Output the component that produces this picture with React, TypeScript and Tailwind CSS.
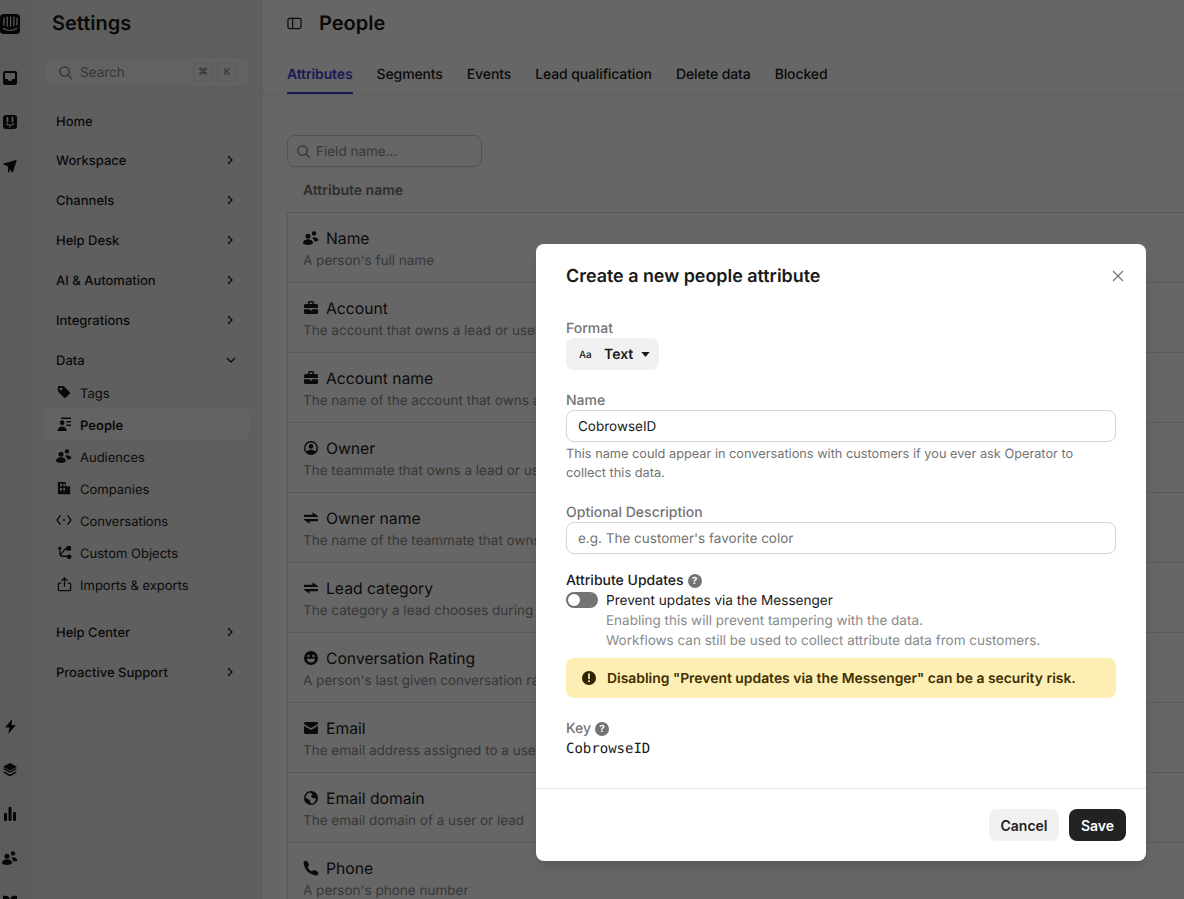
import React from "react";

type IconProps = { className?: string };

const Svg = ({ className, children }: IconProps & { children: React.ReactNode }) => (
  <svg viewBox="0 0 16 16" fill="currentColor" className={className}>
    {children}
  </svg>
);

const PeopleIcon = ({ className }: IconProps) => (
  <Svg className={className}>
    <circle cx="11" cy="3.400" r="2.200" />
    <circle cx="5" cy="6.200" r="2.500" />
    <path d="M9 7.800c1-.8 3-.8 4.200 0 1 .6 2.300 1.500 2.300 2.300 0 .8-1.700 1.300-4.200 1.300-.3-1.400-1.100-2.700-2.300-3.600z" />
    <path d="M0 13c0-2.200 2.300-3.700 5-3.700s5 1.500 5 3.700c0 1.100-2.300 1.900-5 1.900S0 14.100 0 13z" />
  </Svg>
);

const BriefcaseIcon = ({ className }: IconProps) => (
  <Svg className={className}>
    <path d="M5 2.500A1.500 1.500 0 0 1 6.500 1h3A1.500 1.500 0 0 1 11 2.500V4h2.500A1.500 1.500 0 0 1 15 5.500V8H1V5.500A1.500 1.500 0 0 1 2.500 4H5V2.500zM6.500 2.500V4h3V2.500h-3z" fillRule="evenodd" />
    <path d="M1 9.200h6V10.500h2V9.200h6v3.300a1.500 1.500 0 0 1-1.500 1.500h-11A1.500 1.500 0 0 1 1 12.500V9.200z" />
  </Svg>
);

const OwnerIcon = ({ className }: IconProps) => (
  <Svg className={className}>
    <path
      fillRule="evenodd"
      d="M8 1a7 7 0 1 0 0 14A7 7 0 0 0 8 1zm0 1.500a5.500 5.500 0 0 1 4.300 8.900C11.400 10.300 9.800 9.800 8 9.800s-3.400.5-4.300 1.600A5.500 5.500 0 0 1 8 2.500z"
    />
    <circle cx="8" cy="6.400" r="2.300" />
  </Svg>
);

const SwapIcon = ({ className }: IconProps) => (
  <Svg className={className}>
    <path d="M1 4.800h8.500V2.300L15 6.300V7H1zM15 9H1v.7l5.500 4v-2.500H15z" />
  </Svg>
);

const SmileIcon = ({ className }: IconProps) => (
  <Svg className={className}>
    <path
      fillRule="evenodd"
      d="M8 1a7 7 0 1 0 0 14A7 7 0 0 0 8 1zM5.500 4.800a1.200 1.200 0 1 1 0 2.400 1.200 1.200 0 0 1 0-2.400zm5 0a1.200 1.200 0 1 1 0 2.400 1.200 1.200 0 0 1 0-2.400zM3.800 8.800h8.400c-.3 2.200-2 3.700-4.200 3.700S4.100 11 3.800 8.800z"
    />
  </Svg>
);

const MailIcon = ({ className }: IconProps) => (
  <Svg className={className}>
    <path d="M2.500 2h11A1.500 1.500 0 0 1 15 3.500v.6L8 8.200 1 4.100v-.6A1.500 1.500 0 0 1 2.500 2z" />
    <path d="M1 5.800l7 4.100 7-4.100v6.700a1.500 1.500 0 0 1-1.500 1.500h-11A1.500 1.500 0 0 1 1 12.500V5.800z" />
  </Svg>
);

const GlobeIcon = ({ className }: IconProps) => (
  <Svg className={className}>
    <path
      fillRule="evenodd"
      d="M8 1a7 7 0 1 0 0 14A7 7 0 0 0 8 1zM2.500 8c0-2.700 1.900-4.900 4.500-5.400L9.500 4 8 6.500 9.500 8l3.800.500-2 4.300A5.500 5.500 0 0 1 8 13.500L6.500 10 3.500 8.200 2.500 8z"
    />
  </Svg>
);

const PhoneIcon = ({ className }: IconProps) => (
  <Svg className={className}>
    <path d="M4.300 1.200 6 4.600c.2.400.1.800-.2 1.100L4.600 6.900c.8 1.900 2.500 3.600 4.500 4.500l1.200-1.200c.3-.3.700-.4 1.100-.2l3.400 1.700c.4.200.6.600.5 1l-.5 1.700c-.2.600-.7 1-1.300 1C6.900 15.400.6 9.100.6 2.500c0-.6.400-1.100 1-1.300L3.300.700c.4-.1.800.1 1 .5z" />
  </Svg>
);

const SearchIcon = ({ className }: IconProps) => (
  <svg viewBox="0 0 16 16" fill="none" stroke="currentColor" strokeWidth="1.300" strokeLinecap="round" className={className}>
    <circle cx="7" cy="7" r="5" />
    <path d="M10.800 10.800 14.500 14.500" />
  </svg>
);

const Chevron = ({ down }: { down?: boolean }) => (
  <svg viewBox="0 0 10 10" fill="none" stroke="currentColor" strokeWidth="1.300" className="h-[10px] w-[10px]">
    <path d={down ? "M1 3l4 4 4-4" : "M3 1l4 4-4 4"} />
  </svg>
);

const HelpBadge = () => (
  <span className="flex h-[14px] w-[14px] items-center justify-center rounded-full bg-[#737373] text-[10px] font-bold leading-none text-white">
    ?
  </span>
);

const attributes = [
  { name: "Name", desc: "A person's full name", Icon: PeopleIcon },
  { name: "Account", desc: "The account that owns a lead or user", Icon: BriefcaseIcon },
  { name: "Account name", desc: "The name of the account that owns a", Icon: BriefcaseIcon },
  { name: "Owner", desc: "The teammate that owns a lead or user", Icon: OwnerIcon },
  { name: "Owner name", desc: "The name of the teammate that owns", Icon: SwapIcon },
  { name: "Lead category", desc: "The category a lead chooses during", Icon: SwapIcon },
  { name: "Conversation Rating", desc: "A person's last given conversation rating", Icon: SmileIcon },
  { name: "Email", desc: "The email address assigned to a user", Icon: MailIcon },
  { name: "Email domain", desc: "The email domain of a user or lead", Icon: GlobeIcon },
  { name: "Phone", desc: "A person's phone number", Icon: PhoneIcon },
];

const dataItems: { label: string; active?: boolean; icon: React.ReactNode }[] = [
  {
    label: "Tags",
    icon: (
      <Svg className="h-[14px] w-[14px]">
        <path fillRule="evenodd" d="M1 2.200C1 1.500 1.500 1 2.200 1h4.600c.4 0 .7.100 1 .4l6.800 6.800c.5.500.5 1.200 0 1.700l-4.700 4.700c-.5.500-1.200.5-1.700 0L1.400 7.800c-.3-.3-.4-.6-.4-1V2.200zM4.500 3a1.500 1.500 0 1 0 0 3 1.500 1.500 0 0 0 0-3z" />
      </Svg>
    ),
  },
  {
    label: "People",
    active: true,
    icon: (
      <Svg className="h-[15px] w-[15px]">
        <path d="M4.500.5H15v1.600H4.500zM10 4.300h5v1.600h-5zM10 8h5v1.600h-5z" />
        <circle cx="5.500" cy="6" r="2.500" />
        <path d="M.5 15c0-3 2.200-5 5-5s5 2 5 5H.5z" />
      </Svg>
    ),
  },
  { label: "Audiences", icon: <PeopleIcon className="h-4 w-4" /> },
  {
    label: "Companies",
    icon: (
      <Svg className="h-[14px] w-[14px]">
        <path fillRule="evenodd" d="M1 1h9v5h5v9H1V1zm2.500 2.200v2.800h2.200V3.200H3.500zm3.700 0v2.800h1.900V3.200H7.200zM3.500 8v2.800h2.200V8H3.500zm3.700 0v2.800h1.900V8H7.200z" />
      </Svg>
    ),
  },
  {
    label: "Conversations",
    icon: (
      <svg viewBox="0 0 16 16" fill="none" stroke="currentColor" strokeWidth="1.300" className="h-4 w-4">
        <path d="M4.500 3.500 1 8l3.500 4.500M11.500 3.500 15 8l-3.500 4.500" />
        <circle cx="8" cy="8" r="1" fill="currentColor" stroke="none" />
      </svg>
    ),
  },
  {
    label: "Custom Objects",
    icon: (
      <svg viewBox="0 0 16 16" fill="none" stroke="currentColor" strokeWidth="1.400" className="h-[15px] w-[15px]">
        <path d="M3 3v6c0 2 1 3 3 3h6M4 10l5-6h2" />
        <path d="M.5 4.500 3 1l2.500 3.500z" fill="currentColor" stroke="none" />
        <rect x="10" y="1" width="5" height="5" rx="1" fill="currentColor" stroke="none" />
        <circle cx="13" cy="12.500" r="2.500" fill="currentColor" stroke="none" />
      </svg>
    ),
  },
  {
    label: "Imports & exports",
    icon: (
      <svg viewBox="0 0 16 16" fill="none" stroke="currentColor" strokeWidth="1.400" className="h-[15px] w-[15px]">
        <path d="M8 10.500V1.500M5 4l3-3 3 3" />
        <path d="M4.500 6.500H2.500a1 1 0 0 0-1 1v6a1 1 0 0 0 1 1h11a1 1 0 0 0 1-1v-6a1 1 0 0 0-1-1h-2" />
      </svg>
    ),
  },
];

const NavGroup = ({ label }: { label: string }) => (
  <div className="flex h-10 items-center justify-between pl-3 pr-[15px] text-[13px] font-medium text-[#1a1a1a]">
    <span className="pt-1">{label}</span>
    <Chevron />
  </div>
);

const Rail = () => (
  <aside className="flex h-full w-8 shrink-0 flex-col justify-between bg-[#e6e6e6] text-[#111]">
    <div className="flex w-5 flex-col items-center pt-[14px]">
      <svg viewBox="0 0 20 20" className="mb-[22px] h-5 w-5">
        <rect width="20" height="20" rx="3.500" fill="currentColor" />
        <path d="M4 4v7M7.300 3v9M10.600 3v9M13.900 3v9M17 4v7" stroke="#e6e6e6" strokeWidth="1.200" strokeLinecap="round" />
        <path d="M3.500 14.500c3.800 2.400 9.200 2.400 13 0" stroke="#e6e6e6" strokeWidth="1.200" fill="none" strokeLinecap="round" />
      </svg>
      <div className="flex h-11 items-center">
        <svg viewBox="0 0 14 14" className="h-[14px] w-[14px]">
          <path fillRule="evenodd" fill="currentColor" d="M2 0h10a2 2 0 0 1 2 2v10a2 2 0 0 1-2 2H2a2 2 0 0 1-2-2V2a2 2 0 0 1 2-2zm0 2v6h2.500c.3 1.200 1.200 2 2.500 2s2.200-.8 2.500-2H12V2H2z" />
        </svg>
      </div>
      <div className="flex h-11 items-center">
        <svg viewBox="0 0 14 14" className="h-[14px] w-[14px]">
          <rect width="14" height="14" rx="3" fill="currentColor" />
          <path d="M4.500 2.500v4M9.500 2.500v4" stroke="#e6e6e6" strokeWidth="1.700" strokeLinecap="round" />
          <path d="M3 8.500c2.300 2 5.700 2 8 0M7 9.500v3" stroke="#e6e6e6" strokeWidth="1.200" fill="none" />
        </svg>
      </div>
      <div className="flex h-11 items-center">
        <svg viewBox="0 0 14 14" className="h-[14px] w-[14px]">
          <path fill="currentColor" d="M13.800.8 10 13.200c-.2.500-.7.500-1 .2L7.200 10.500 6 13.500c-.4.300-1 .1-1-.4V7.500L.5 5.500c-.4-.3-.3-.8.100-1z" />
        </svg>
      </div>
    </div>
    <div className="mb-[-25px] flex w-5 flex-col items-center">
      <div className="flex h-11 items-center">
        <svg viewBox="0 0 14 14" className="h-[15px] w-[15px]">
          <path fill="currentColor" d="M8.500 0 2 8h4l-1 6 7-8.500H8z" />
        </svg>
      </div>
      <div className="flex h-11 items-center">
        <svg viewBox="0 0 16 16" className="h-4 w-4">
          <path fill="currentColor" d="M8 1l7 3.800L8 8.600 1 4.800z" />
          <path fill="currentColor" d="M1 7l1.500-.8L8 9.200l5.500-3L15 7 8 10.800z" />
          <path fill="currentColor" d="M1 10.200l1.500-.8L8 12.400l5.500-3 1.500.8L8 14.500z" />
        </svg>
      </div>
      <div className="flex h-11 items-center">
        <svg viewBox="0 0 14 14" className="h-[14px] w-[14px]">
          <rect x="1" y="6" width="3" height="8" rx="1" fill="currentColor" />
          <rect x="5.500" y="0" width="3" height="14" rx="1" fill="currentColor" />
          <rect x="10" y="5" width="3" height="9" rx="1" fill="currentColor" />
        </svg>
      </div>
      <div className="flex h-11 items-center">
        <PeopleIcon className="h-4 w-4" />
      </div>
      <div className="flex h-11 items-center">
        <svg viewBox="0 0 16 14" className="h-[14px] w-4">
          <path fill="currentColor" d="M1 1c2.500-.6 5 0 6.300 1.500V13C6 11.500 3.500 11 1 11.500zM15 1c-2.500-.6-5 0-6.300 1.500V13c1.300-1.500 3.800-2 6.300-1.500z" />
        </svg>
      </div>
    </div>
  </aside>
);

const Sidebar = () => (
  <aside className="flex h-full w-[231px] shrink-0 flex-col border-r border-[#e6e6e6] bg-[#eeeeee] pl-3 pr-[12px]">
    <h1 className="pl-2 pt-[9px] text-xl font-semibold leading-7 text-[#1a1a1a]">Settings</h1>
    <div className="mt-5 flex h-[30px] items-center rounded-lg border border-[#e8e8e8] bg-[#f4f4f4] pl-[13px] pr-3 text-[#737373]">
      <SearchIcon className="h-[15px] w-[15px]" />
      <span className="ml-[7px] flex-1 pt-[2px] text-[13.5px] text-[#8a8a8a]">Search</span>
      <span className="flex h-5 w-5 items-center justify-center rounded-md border border-[#e6e6e6] font-['DejaVu_Sans',sans-serif] text-[10px]">
        ⌘
      </span>
      <span className="ml-1 flex h-5 w-5 items-center justify-center rounded-md border border-[#e6e6e6] text-[10px]">K</span>
    </div>
    <nav className="mt-[15px] flex flex-col">
      <div className="flex h-[38px] items-center pl-3 text-[13px] font-medium text-[#1a1a1a]">
        <span className="pt-1">Home</span>
      </div>
      <NavGroup label="Workspace" />
      <NavGroup label="Channels" />
      <NavGroup label="Help Desk" />
      <NavGroup label="AI & Automation" />
      <NavGroup label="Integrations" />
      <div className="flex h-9 items-center justify-between pl-3 pr-[14px] pt-1 text-[13px] font-medium text-[#1a1a1a]">
        <span className="pt-1">Data</span>
        <Chevron down />
      </div>
      {dataItems.map((item) => (
        <div
          key={item.label}
          className={`flex h-8 items-center rounded-lg pl-[12px] text-[13px] text-[#1a1a1a] ${
            item.active ? "bg-[#f8f8f8] font-semibold" : ""
          }`}
        >
          <span className="flex w-4 justify-center">{item.icon}</span>
          <span className="ml-2 pt-[6px]">{item.label}</span>
        </div>
      ))}
      <div className="mt-3">
        <NavGroup label="Help Center" />
        <NavGroup label="Proactive Support" />
      </div>
    </nav>
  </aside>
);

const tabs = ["Attributes", "Segments", "Events", "Lead qualification", "Delete data", "Blocked"];

const Main = () => (
  <main className="h-full min-w-0 flex-1 overflow-hidden bg-white">
    <header className="flex h-[60px] items-start gap-[17px] pl-6 pt-[9px]">
      <svg viewBox="0 0 16 16" fill="none" stroke="currentColor" strokeWidth="1.300" className="mt-[7px] h-[15px] w-[15px] text-[#1a1a1a]">
        <rect x="1" y="2.500" width="14" height="11" rx="2" />
        <path d="M6 2.500v11" />
      </svg>
      <h2 className="text-xl font-semibold leading-7 text-[#1a1a1a]">People</h2>
    </header>
    <div className="flex h-[35px] gap-6 border-b border-[#ececec] pl-6">
      {tabs.map((tab, i) => (
        <div
          key={tab}
          className={`h-[34px] pt-[5px] text-sm leading-5 tracking-[-0.12px] ${
            i === 0 ? "border-b-2 border-[#3b46d8] font-semibold text-[#3b46d8]" : "font-medium text-[#1a1a1a]"
          }`}
        >
          {tab}
        </div>
      ))}
    </div>
    <div className="pl-6 pt-10">
      <div className="flex h-8 w-[195px] items-center rounded-lg border border-[#cfcfcf] pl-2 text-[#737373]">
        <SearchIcon className="h-[15px] w-[15px]" />
        <span className="ml-[5px] pt-[2px] text-[13.5px] text-[#8a8a8a]">Field name...</span>
      </div>
      <div className="flex h-[45px] items-center pl-4 pt-[2px] text-sm font-semibold text-[#737373]">Attribute name</div>
      <div className="w-[1200px] border-l border-t border-[#dedede]">
        {attributes.map(({ name, desc, Icon }) => (
          <div key={name} className="h-[70px] border-b border-[#dedede] pl-[15px] pt-[13px]">
            <div className="flex h-6 items-center text-[15.7px] leading-6 text-[#1a1a1a]">
              <Icon className="mr-[7px] h-4 w-4" />
              <span className="pt-[2px]">{name}</span>
            </div>
            <p className="pt-px text-[13.5px] leading-5 text-[#8a8a8a]">{desc}</p>
          </div>
        ))}
      </div>
    </div>
  </main>
);

const Field = ({ label, value, placeholder }: { label: string; value?: string; placeholder?: string }) => (
  <div>
    <div className="h-5 pt-[2px] text-sm font-medium leading-[18px] text-[#737373]">{label}</div>
    <div
      className={`flex h-8 items-center rounded-lg border border-[#d3d3d3] px-[11px] text-[13.5px] ${
        value ? "pt-[3px] text-[#1a1a1a]" : "pt-[2px] text-[#737373]"
      }`}
    >
      {value ?? placeholder}
    </div>
  </div>
);

const Modal = () => (
  <div className="absolute left-[536px] top-[244px] flex h-[617px] w-[610px] flex-col rounded-lg bg-white shadow-lg">
    <div className="flex-1 px-[30px] pt-[19px]">
      <div className="flex h-[26px] items-center justify-between">
        <h3 className="pt-[2px] text-[17.9px] font-semibold text-[#1a1a1a]">Create a new people attribute</h3>
        <svg viewBox="0 0 12 12" fill="none" stroke="#737373" strokeWidth="1.200" className="mr-[-8px] h-[12px] w-[12px]">
          <path d="M1 1l10 10M11 1 1 11" />
        </svg>
      </div>
      <div className="mt-[29px] h-5 pt-[2px] text-sm font-medium leading-[18px] text-[#737373]">Format</div>
      <div className="flex h-8 w-[93px] items-center rounded-lg bg-[#f1f1f1] pl-[13px] text-sm font-semibold text-[#1a1a1a]">
        <span className="w-[25px] pt-[2px] text-[10px] font-medium">Aa</span>
        <span className="pt-[2px]">Text</span>
        <svg viewBox="0 0 10 6" className="ml-2 h-[5px] w-[9px]">
          <path d="M0 0h10L5 6z" fill="currentColor" />
        </svg>
      </div>
      <div className="mt-5">
        <Field label="Name" value="CobrowseID" />
      </div>
      <p className="mt-[3px] w-[530px] text-[12.75px] leading-[19px] text-[#737373]">
        This name could appear in conversations with customers if you ever ask Operator to collect this data.
      </p>
      <div className="mt-[19px]">
        <Field label="Optional Description" placeholder="e.g. The customer's favorite color" />
      </div>
      <div className="mt-4 flex h-5 items-center gap-1 pt-[2px] text-sm font-medium leading-[18px] text-[#1a1a1a]">
        Attribute Updates <HelpBadge />
      </div>
      <div className="flex h-5 items-center text-[13.6px] leading-5 text-[#1a1a1a]">
        <span className="flex h-4 w-8 items-center rounded-full bg-[#737373] pl-[2px]">
          <span className="h-3 w-3 rounded-full bg-white" />
        </span>
        <span className="ml-2 pt-[2px]">Prevent updates via the Messenger</span>
      </div>
      <p className="ml-10 pt-px text-[13.5px] leading-5 text-[#8a8a8a]">
        Enabling this will prevent tampering with the data.
        <br />
        Workflows can still be used to collect attribute data from customers.
      </p>
      <div className="mt-[7px] flex h-10 items-center rounded-lg bg-[#fdeeb3] pl-4 text-[13.9px] font-semibold text-[#3d3000]">
        <svg viewBox="0 0 14 14" className="mr-[11px] h-[14px] w-[14px]">
          <circle cx="7" cy="7" r="7" fill="#2e2400" />
          <path d="M7 3v4.500" stroke="#fdeeb3" strokeWidth="1.700" strokeLinecap="round" />
          <circle cx="7" cy="10.300" r="1" fill="#fdeeb3" />
        </svg>
        <span className="pt-[2px]">Disabling "Prevent updates via the Messenger" can be a security risk.</span>
      </div>
      <div className="mt-5 flex h-5 items-center gap-1 pt-[2px] text-sm font-medium leading-[18px] text-[#737373]">
        Key <HelpBadge />
      </div>
      <div className="h-5 pt-[2px] font-['DejaVu_Sans_Mono',monospace] text-sm leading-[18px] text-[#1a1a1a]">CobrowseID</div>
    </div>
    <div className="flex h-[73px] items-start justify-end gap-[10px] border-t border-[#e6e6e6] pr-5 pt-5">
      <button className="h-8 w-[70px] rounded-lg bg-[#f1f1f1] pt-[2px] text-sm font-semibold text-[#222]">Cancel</button>
      <button className="h-8 w-[57px] rounded-lg bg-[#222] pt-[2px] text-sm font-semibold text-white">Save</button>
    </div>
  </div>
);

export default function App() {
  return (
    <div className="relative flex h-[899px] w-[1184px] overflow-hidden font-['Inter',sans-serif] [text-rendering:geometricPrecision]">
      <Rail />
      <Sidebar />
      <Main />
      <div className="absolute inset-0 bg-black/60" />
      <Modal />
    </div>
  );
}
